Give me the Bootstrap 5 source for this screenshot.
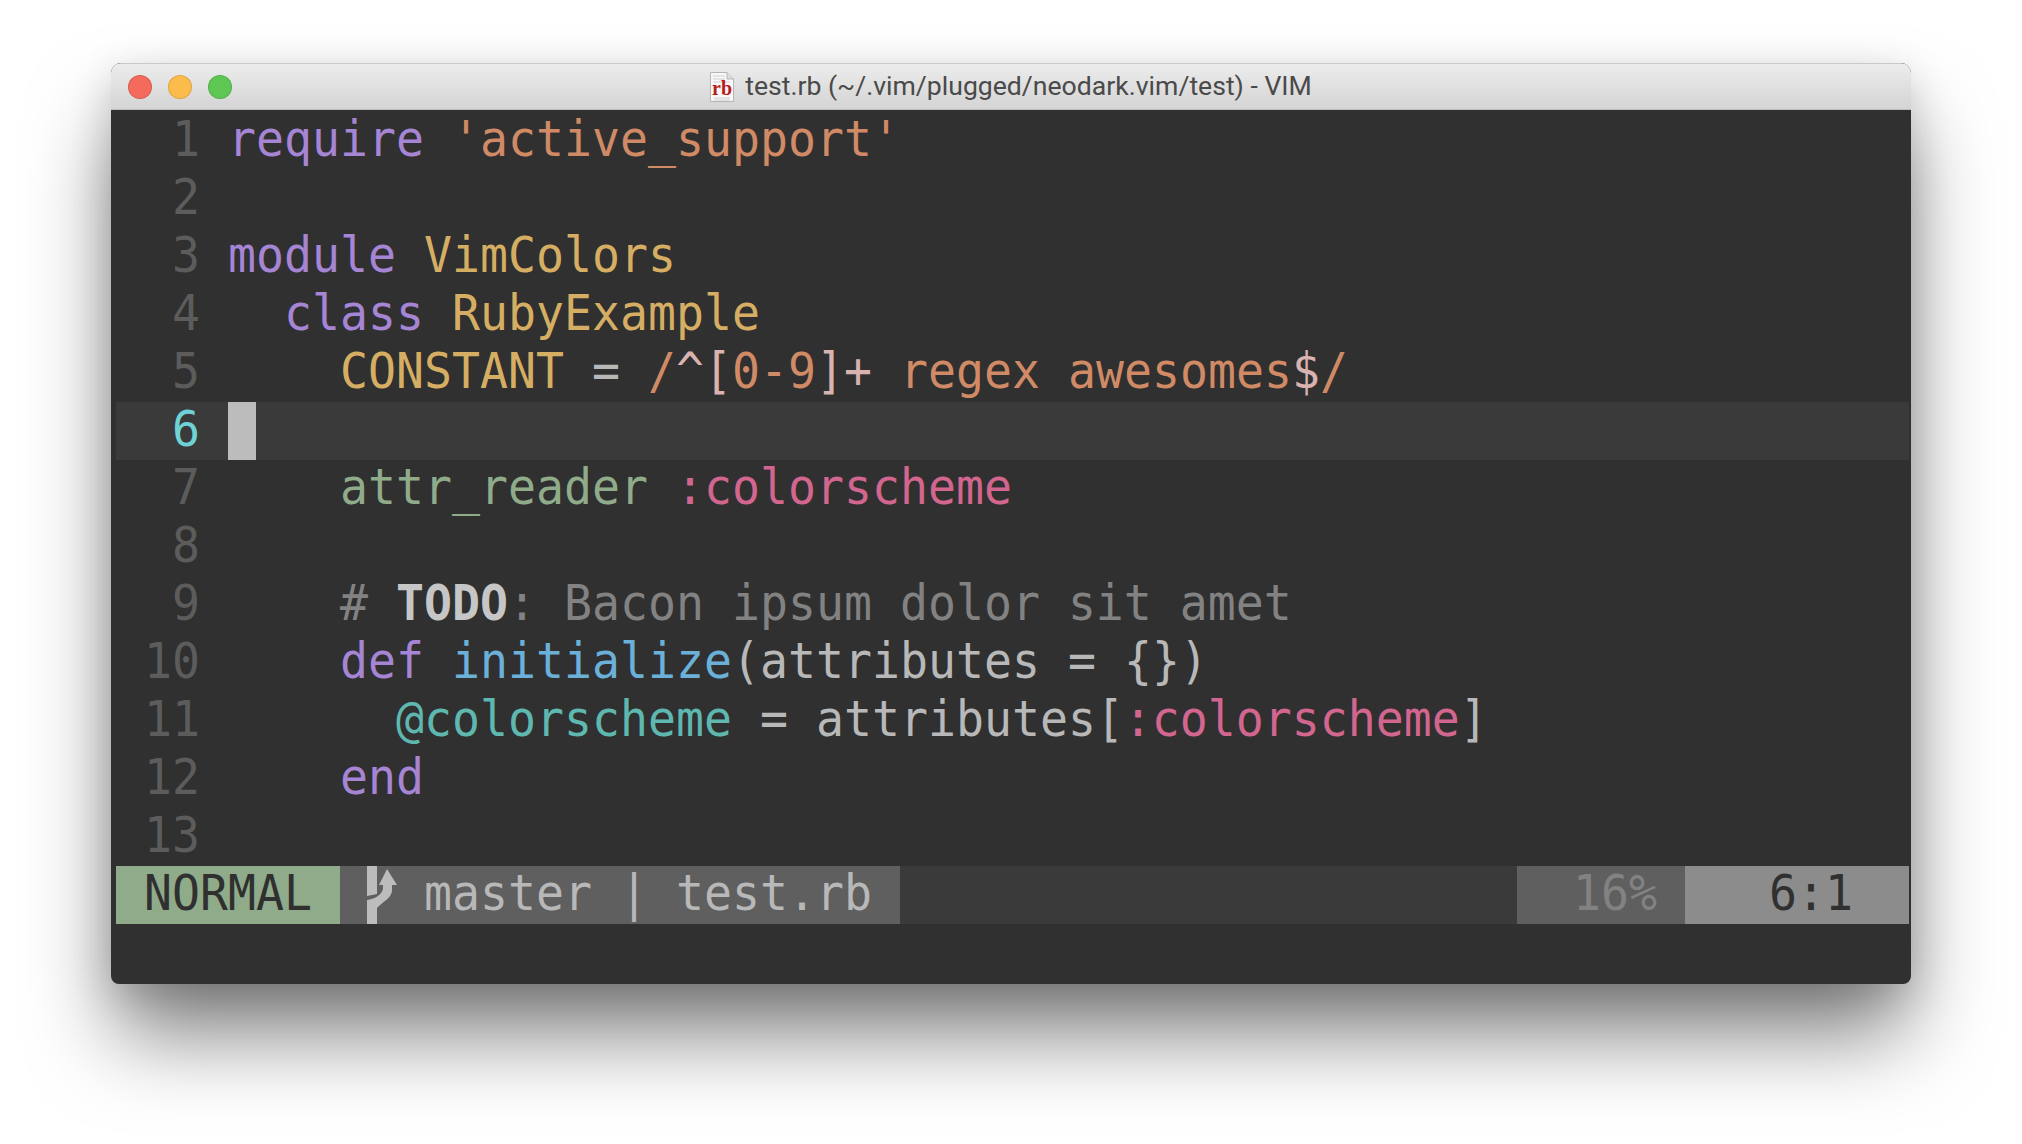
<!DOCTYPE html>
<html lang="en">
<head>
<meta charset="utf-8">
<title>test.rb - VIM</title>
<link rel="stylesheet" href="https://cdn.jsdelivr.net/npm/bootstrap@5.3.0/dist/css/bootstrap.min.css">
<style>
html,body{height:100%;background:#fff;overflow:hidden}
.stage{padding:63px 111px 0}
.vimwin{width:1800px;height:921px;border-radius:10px 10px 8px 8px;background:#303030;box-shadow:0 55px 85px -5px rgba(0,0,0,.5),0 10px 40px rgba(0,0,0,.15);overflow:hidden}
.titlebar{height:47px;flex:none;background:linear-gradient(#ececec,#d4d4d4);border-top:1px solid #c9c9c9;border-bottom:1px solid #bdbdbd;font-family:Roboto,"Liberation Sans",sans-serif;font-size:26.6px;color:#4a4a4a;line-height:1}
.tb-side{flex:1 1 0;padding-left:17px;gap:16px}
.light{width:24px;height:24px;border:1px solid rgba(0,0,0,.12)}
.l-red{background:#f46b5e}.l-yel{background:#fcbc4c}.l-grn{background:#5fc754}
.docicon{width:24px;height:30px;margin-right:11px;flex:none}
.editor{padding:2px 2px 0 5px;font-family:"DejaVu Sans Mono","Liberation Mono",monospace;font-size:46.5px;line-height:56px;color:#b8b8b8}
.vrow{height:58px}
.ln{display:block;white-space:pre;transform:scaleY(1.06);transform-origin:0 44px}
.nr{width:112px;flex:none;color:#5c5c5c;text-align:right;padding-right:28px}
.cur{background:#3a3a3a}
.cur .nr{color:#6fd3d6}
.cursor{width:28px;height:58px;background:#bcbcbc}
.k{color:#a585d4}.s{color:#d08a65}.y{color:#d6ae63}.g{color:#8fab8a}.p{color:#d2668f}.b{color:#6bb0d8}.t{color:#5fb8b0}.c{color:#828282}.e{color:#d9b3b0}
.todo{font-weight:700;color:#c6c6c6}
.st-mode{width:224px;background:#8fab8a;color:#303030;padding-left:28px}
.st-branch{width:560px;background:#5f5f5f;padding-left:28px}
.st-fill{background:#3a3a3a}
.st-pct{width:168px;background:#5f5f5f;color:#828282;padding-left:56px}
.st-pos{width:224px;background:#8c8c8c;color:#303030;padding-left:84px}
.brg{width:56px;height:58px;flex:none;overflow:visible;fill:#bcbcbc}
</style>
</head>
<body>
<div class="stage">
  <div class="vimwin d-flex flex-column">
    <div class="titlebar d-flex align-items-center">
      <div class="tb-side d-flex align-items-center">
        <span class="light l-red rounded-circle"></span>
        <span class="light l-yel rounded-circle"></span>
        <span class="light l-grn rounded-circle"></span>
      </div>
      <div class="d-flex align-items-center">
        <svg class="docicon" viewBox="0 0 24 30">
          <path d="M.5 .5H17L23.5 7V29.5H.5Z" fill="#f8f8f8" stroke="#b5b5b5"/>
          <path d="M17 .5V7H23.5" fill="#dcdcdc" stroke="#b5b5b5"/>
          <path d="M3 4H15M3 7H15M3 10H20M4 26H20M4 28H20" stroke="#cfcfcf" stroke-width="1"/>
          <text x="12" y="23" text-anchor="middle" font-family="Liberation Serif" font-weight="700" font-size="20" fill="#b81c1c">rb</text>
        </svg>
        <span>test.rb (~/.vim/plugged/neodark.vim/test) - VIM</span>
      </div>
      <div class="tb-side"></div>
    </div>
    <div class="editor">
      <div class="vrow d-flex"><span class="nr"><span class="ln">1</span></span><span class="ln"><span class="k">require</span> <span class="s">'active_support'</span></span></div>
      <div class="vrow d-flex"><span class="nr"><span class="ln">2</span></span></div>
      <div class="vrow d-flex"><span class="nr"><span class="ln">3</span></span><span class="ln"><span class="k">module</span> <span class="y">VimColors</span></span></div>
      <div class="vrow d-flex"><span class="nr"><span class="ln">4</span></span><span class="ln">  <span class="k">class</span> <span class="y">RubyExample</span></span></div>
      <div class="vrow d-flex"><span class="nr"><span class="ln">5</span></span><span class="ln">    <span class="y">CONSTANT</span> = <span class="s">/</span><span class="e">^[</span><span class="s">0-9</span><span class="e">]+</span><span class="s"> regex awesomes</span><span class="e">$</span><span class="s">/</span></span></div>
      <div class="vrow d-flex cur"><span class="nr"><span class="ln">6</span></span><span class="cursor"></span></div>
      <div class="vrow d-flex"><span class="nr"><span class="ln">7</span></span><span class="ln">    <span class="g">attr_reader</span> <span class="p">:colorscheme</span></span></div>
      <div class="vrow d-flex"><span class="nr"><span class="ln">8</span></span></div>
      <div class="vrow d-flex"><span class="nr"><span class="ln">9</span></span><span class="ln">    <span class="c"># </span><span class="todo">TODO</span><span class="c">: Bacon ipsum dolor sit amet</span></span></div>
      <div class="vrow d-flex"><span class="nr"><span class="ln">10</span></span><span class="ln">    <span class="k">def</span> <span class="b">initialize</span>(attributes = {})</span></div>
      <div class="vrow d-flex"><span class="nr"><span class="ln">11</span></span><span class="ln">      <span class="t">@colorscheme</span> = attributes[<span class="p">:colorscheme</span>]</span></div>
      <div class="vrow d-flex"><span class="nr"><span class="ln">12</span></span><span class="ln">    <span class="k">end</span></span></div>
      <div class="vrow d-flex"><span class="nr"><span class="ln">13</span></span></div>
      <div class="vrow d-flex">
        <span class="st-mode"><span class="ln">NORMAL</span></span>
        <span class="st-branch d-flex">
          <svg class="brg" viewBox="0 0 56 58"><path d="M-1 0H9V28L-1 30Z"/><path d="M-1 34C6 33 13 30 15 23V19H11L19 3L29 19H24V25C23 33 14 36 9 42V58H-1Z"/></svg>
          <span class="ln">master | test.rb</span>
        </span>
        <span class="st-fill flex-grow-1"></span>
        <span class="st-pct"><span class="ln">16%</span></span>
        <span class="st-pos"><span class="ln">6:1</span></span>
      </div>
    </div>
  </div>
</div>
</body>
</html>
